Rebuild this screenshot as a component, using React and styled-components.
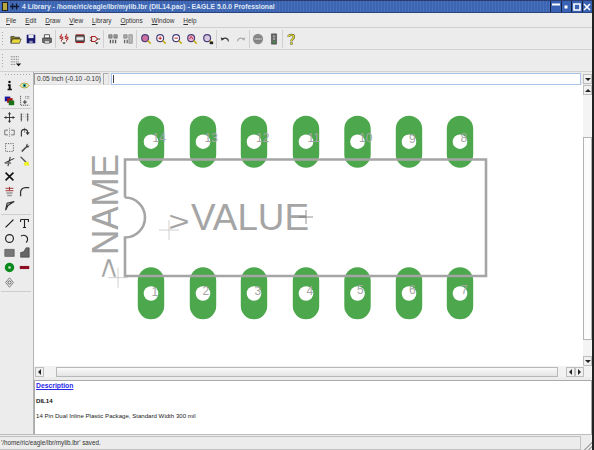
import React from "react";
import styled, { createGlobalStyle, css } from "styled-components";

const GlobalStyle = createGlobalStyle`
    html, body {
        margin: 0;
        padding: 0;
        background: #ececec;
    }
    * {
        box-sizing: border-box;
    }
`;

const Icon = ({ children, size = 12 }) => (
    <svg width={size} height={size} viewBox="0 0 14 14" fill="none" xmlns="http://www.w3.org/2000/svg">
        {children}
    </svg>
);

const magnifier = (lens, extra) => (
    <Icon>
        <circle cx="6" cy="6" r="4" fill={lens} stroke="#4a3f7a" strokeWidth="1.4" />
        <path d="M9 9L12.5 12.5" stroke="#c8b020" strokeWidth="2" />
        {extra}
    </Icon>
);

const icons = {
    open: (
        <Icon>
            <path d="M1 4h4l1 1h5v2H3L1 11z" fill="#8a7a20" stroke="#333" strokeWidth="0.8" />
            <path d="M3 7h10l-2 5H1z" fill="#e8d838" stroke="#333" strokeWidth="0.8" />
        </Icon>
    ),
    save: (
        <Icon>
            <path d="M2 2h10v10H2z" fill="#16166e" />
            <path d="M4 2h6v4H4z" fill="#e8e8f0" />
            <path d="M5 9h4v3H5z" fill="#9090b0" />
        </Icon>
    ),
    print: (
        <Icon>
            <path d="M4 2h6v4H4z" fill="#fff" stroke="#444" />
            <path d="M2 6h10v5H2z" fill="#777" stroke="#333" />
            <path d="M4 9h6v3H4z" fill="#ddd" stroke="#444" strokeWidth="0.7" />
        </Icon>
    ),
    symbol: (
        <Icon>
            <path d="M4 1v2l-2 1 4 1-4 1 4 1-2 1v2M10 1v2l-2 1 4 1-4 1 4 1-2 1v2" stroke="#b02020" strokeWidth="1" />
            <path d="M5 11l2 2 2-2z" fill="#111" />
        </Icon>
    ),
    pac: (
        <Icon>
            <path d="M2 3h10v7H2z" fill="#777" stroke="#222" />
            <path d="M3 5h8v3H3z" fill="#eee" />
            <path d="M2 11h10" stroke="#b02020" strokeWidth="1.5" />
            <path d="M2 2h10" stroke="#b02020" strokeWidth="1" />
        </Icon>
    ),
    dev: (
        <Icon>
            <path d="M3 4h4l3 3-3 3H3z" stroke="#b02020" strokeWidth="1.2" />
            <path d="M1 5.5h2M1 8.5h2M10 7h3" stroke="#333" />
            <path d="M7 11l2 2 2-2z" fill="#111" />
        </Icon>
    ),
    partA: (
        <Icon>
            <path d="M2 2h4v4H2zM8 2h4v4H8z" fill="#999" stroke="#555" strokeWidth="0.6" />
            <path d="M4 8v4M7 8v4M10 8v4" stroke="#555" strokeWidth="1.5" />
        </Icon>
    ),
    partB: (
        <Icon>
            <path d="M2 2h4v4H2z" fill="#aaa" stroke="#666" strokeWidth="0.6" />
            <path d="M8 2h4v10H8z" fill="#bbb" stroke="#666" strokeWidth="0.6" />
            <path d="M3 8v4M6 8v4" stroke="#666" strokeWidth="1.5" />
        </Icon>
    ),
    zoomFit: magnifier("#d070a0"),
    zoomIn: magnifier("#fff", <path d="M4 6h4M6 4v4" stroke="#c02020" strokeWidth="1.2" />),
    zoomOut: magnifier("#fff", <path d="M4 6h4" stroke="#c02020" strokeWidth="1.2" />),
    zoomPrev: magnifier("#e8b0d0", <path d="M4 7l2-3 2 3" stroke="#c02020" />),
    zoomSel: magnifier("#d8c8e0", <path d="M9 10h4v3H9z" fill="#222" />),
    undo: (
        <Icon>
            <path d="M11 10C11 6 7 5 4 7" stroke="#333" strokeWidth="1.3" />
            <path d="M2 5l1 4 3-2z" fill="#333" />
        </Icon>
    ),
    redo: (
        <Icon>
            <path d="M3 10C3 6 7 5 10 7" stroke="#aaa" strokeWidth="1.3" />
            <path d="M12 5l-1 4-3-2z" fill="#aaa" />
        </Icon>
    ),
    stop: (
        <Icon>
            <circle cx="7" cy="7" r="6" fill="#8a8a8a" />
            <path d="M3 6h8v2H3z" fill="#ddd" />
            <path d="M4.5 4.5v5M7 4.5v5M9.5 4.5v5" stroke="#666" strokeWidth="0.8" />
        </Icon>
    ),
    run: (
        <Icon>
            <path d="M4 1h6v12H4z" fill="#666" stroke="#333" strokeWidth="0.6" />
            <circle cx="7" cy="4" r="1.3" fill="#a8a8a8" />
            <circle cx="7" cy="7" r="1.3" fill="#a8a8a8" />
            <circle cx="7" cy="10.5" r="1.3" fill="#30a030" />
        </Icon>
    ),
    help: (
        <Icon>
            <path d="M4 4.5C4 1.5 10.5 1.5 10.5 4.5 10.5 7 7.5 6.5 7.5 9.5" stroke="#333" strokeWidth="2.6" />
            <path d="M4 4.5C4 1.5 10.5 1.5 10.5 4.5 10.5 7 7.5 6.5 7.5 9.5" stroke="#f0e830" strokeWidth="1.5" />
            <path d="M6.3 11h2.4v2.4H6.3z" fill="#f0e830" stroke="#333" strokeWidth="0.5" />
        </Icon>
    ),
    grid: (
        <Icon>
            <path d="M1 2h9M1 5h9M1 8h9M1 11h6" stroke="#555" strokeDasharray="1 1" />
            <path d="M7 10h6l-3 3z" fill="#111" />
        </Icon>
    ),
    info: (
        <Icon>
            <circle cx="7" cy="2.5" r="1.6" fill="#111" />
            <path d="M5 5.5h3.5V11H10v2H4.5v-2H6V7.5H5z" fill="#111" />
        </Icon>
    ),
    eye: (
        <Icon>
            <path d="M1 7c3-4 9-4 12 0-3 4-9 4-12 0z" fill="#f4f0b0" stroke="#a09020" />
            <circle cx="7" cy="7" r="2.2" fill="#20a0a0" />
            <circle cx="7" cy="7" r="0.9" fill="#111" />
        </Icon>
    ),
    layers: (
        <Icon>
            <path d="M1 2h7v6H1z" fill="#1818a0" />
            <path d="M4 4h7v6H4z" fill="#a01818" />
            <path d="M6 7h7v6H6z" fill="#187018" />
        </Icon>
    ),
    mark: (
        <Icon>
            <path d="M2 1v12h11" stroke="#333" strokeDasharray="1.5 1" />
            <path d="M5 9h5M7.5 6.5v5" stroke="#111" />
            <path d="M8 2h5M8 4h5" stroke="#555" strokeDasharray="1 1" />
        </Icon>
    ),
    move: (
        <Icon>
            <path d="M7 1v12M1 7h12" stroke="#333" strokeWidth="1.2" />
            <path d="M7 0l2 3H5zM7 14l2-3H5zM0 7l3-2v4zM14 7l-3-2v4z" fill="#333" />
        </Icon>
    ),
    copy: (
        <Icon>
            <path d="M3 2v10M2 3h2M2 6h2M2 9h2M11 2v10M10 3h2M10 6h2M10 9h2" stroke="#555" strokeWidth="1.2" />
            <path d="M5 3h1M5 6h1M8 3h1M8 6h1" stroke="#999" />
        </Icon>
    ),
    mirror: (
        <Icon>
            <path d="M7 1v12" stroke="#777" strokeDasharray="1.5 1" />
            <path d="M5 4H1v6h4M9 4h4v6H9" stroke="#666" strokeWidth="1.1" />
        </Icon>
    ),
    rotate: (
        <Icon>
            <path d="M3 12V7a4 4 0 0 1 8 0" stroke="#333" strokeWidth="1.4" />
            <path d="M9 7h4l-2 3zM7 1v6" fill="#333" stroke="#333" strokeWidth="0.7" />
        </Icon>
    ),
    group: (
        <Icon>
            <path d="M2 2h10v10H2z" stroke="#444" strokeDasharray="1.5 1.5" />
        </Icon>
    ),
    wrench: (
        <Icon>
            <path d="M12 2L9 3.500v2L3 11l1 2 6-6h2l1.500-3-2 1-1-1z" fill="#444" />
        </Icon>
    ),
    cut: (
        <Icon>
            <path d="M13 3L1 9M8 1L5 13" stroke="#333" strokeWidth="1.3" />
            <path d="M1 8h8v2H1z" fill="#777" />
        </Icon>
    ),
    paint: (
        <Icon>
            <path d="M2 1l7 7" stroke="#555" strokeWidth="1.6" />
            <path d="M7 8l5-1 1 5H6z" fill="#f0f020" />
        </Icon>
    ),
    del: (
        <Icon>
            <path d="M2 2l10 10M12 2L2 12" stroke="#111" strokeWidth="2" />
        </Icon>
    ),
    add: (
        <Icon>
            <path d="M2 3h10M2 6h10M7 1v5" stroke="#a03030" strokeWidth="1.2" />
            <path d="M3 8h8v2H3zM4 11h6v2H4z" fill="#999" />
        </Icon>
    ),
    miter: (
        <Icon>
            <path d="M2 13V8a6 6 0 0 1 6-6h5" stroke="#333" strokeWidth="1.6" />
        </Icon>
    ),
    split: (
        <Icon>
            <path d="M2 13L4 4l9-2-8 5z" stroke="#333" strokeWidth="1.5" />
        </Icon>
    ),
    line: (
        <Icon>
            <path d="M2 12L12 2" stroke="#111" strokeWidth="1.4" />
        </Icon>
    ),
    text: (
        <Icon>
            <path d="M2 2h10v3M2 2v3M7 2v10M5 12h4" stroke="#222" strokeWidth="1.4" />
        </Icon>
    ),
    circle: (
        <Icon>
            <circle cx="7" cy="7" r="5" stroke="#222" strokeWidth="1.5" />
        </Icon>
    ),
    arc: (
        <Icon>
            <path d="M2.500 4A5 5 0 1 1 9 12" stroke="#222" strokeWidth="1.5" />
        </Icon>
    ),
    rect: (
        <Icon>
            <path d="M1 3h12v9H1z" fill="#777" stroke="#444" strokeWidth="0.7" />
        </Icon>
    ),
    polygon: (
        <Icon>
            <path d="M2 13V7l4-1 3-5h4v12z" fill="#666" stroke="#333" strokeWidth="0.7" />
        </Icon>
    ),
    pad: (
        <Icon>
            <circle cx="7" cy="7" r="6" fill="#0a8a1a" />
            <circle cx="7" cy="7" r="1.600" fill="#d0e8d0" />
        </Icon>
    ),
    smd: (
        <Icon>
            <path d="M1 5h12v4H1z" fill="#8c0f22" />
        </Icon>
    ),
    origin: (
        <Icon>
            <path d="M7 1l5 6-5 6-5-6z" stroke="#666" />
            <circle cx="7" cy="7" r="2" stroke="#444" />
        </Icon>
    ),
};

const MENU = ["File", "Edit", "Draw", "View", "Library", "Options", "Window", "Help"];

const TOP_TOOLS = [
    ["open", "save", "print"],
    ["symbol", "pac", "dev"],
    ["partA", "partB"],
    ["zoomFit", "zoomIn", "zoomOut", "zoomPrev", "zoomSel"],
    ["undo", "redo"],
    ["stop", "run"],
    ["help"],
];

const SIDE_TOOLS = [
    ["info", "eye", "layers", "mark"],
    ["move", "copy", "mirror", "rotate", "group", "wrench", "cut", "paint", "del", null, "add", "miter", "split", null],
    ["line", "text", "circle", "arc", "rect", "polygon", "pad", "smd", "origin", null],
];

const PADS_X = [151, 203, 254, 306, 357.500, 409, 460];
const TOP_LABELS = [
    ["14", 152.500, 142],
    ["13", 204.500, 142],
    ["12", 256, 142],
    ["11", 307.500, 142],
    ["10", 359, 142],
    ["9", 409, 143],
    ["8", 460.500, 142],
];
const BOTTOM_LABELS = [
    ["1", 151.500, 296],
    ["2", 202.500, 295],
    ["3", 254.500, 295],
    ["4", 306.500, 295],
    ["5", 357, 294],
    ["6", 409, 294],
    ["7", 461, 294],
];

const Cross = ({ x, y, r, color }) => (
    <path d={`M${x - r} ${y}H${x + r}M${x} ${y - r}V${y + r}`} stroke={color} strokeWidth="0.8" />
);

const Board = () => (
    <CanvasSvg viewBox="34 85 549 281" xmlns="http://www.w3.org/2000/svg">
        {PADS_X.map((x) => (
            <g key={x}>
                <rect x={x - 13.200} y="115.700" width="26.400" height="52" rx="13.200" fill="#4ca74d" />
                <circle cx={x} cy="141.700" r="7.300" fill="#fff" />
                <rect x={x - 13.200} y="267.300" width="26.400" height="52" rx="13.200" fill="#4ca74d" />
                <circle cx={x} cy="293.500" r="7.300" fill="#fff" />
            </g>
        ))}
        <path
            d="M125 197.500V159.500H486V276H125V237.500A20 20 0 0 0 125 197.500"
            stroke="#a5a5a5"
            strokeWidth="2.600"
            fill="none"
        />
        {[...TOP_LABELS, ...BOTTOM_LABELS].map(([label, x, y]) => (
            <PadLabel key={label} x={x} y={y}>
                {label}
            </PadLabel>
        ))}
        <PromptText x="168.500" y="230.500" textLength="21" lengthAdjust="spacingAndGlyphs">
            &gt;
        </PromptText>
        <BigText x="191" y="230" textLength="118" lengthAdjust="spacingAndGlyphs">
            VALUE
        </BigText>
        <PromptText transform="translate(118 278.500) rotate(-90)" textLength="21" lengthAdjust="spacingAndGlyphs">
            &gt;
        </PromptText>
        <BigText transform="translate(118 255) rotate(-90)" textLength="101" lengthAdjust="spacingAndGlyphs">
            NAME
        </BigText>
        <Cross x={118} y={277.700} r={10} color="#c4c4c4" />
        <Cross x={169} y={230} r={10} color="#c4c4c4" />
        <Cross x={306} y={217} r={7} color="#777" />
    </CanvasSvg>
);

const App = () => (
    <Window>
        <GlobalStyle />
        <TitleBar>
            <TitleIcon />
            <TitlePin>
                <svg width="9" height="9" viewBox="0 0 9 9" xmlns="http://www.w3.org/2000/svg">
                    <path d="M0 4.500h9M2.500 1.500v6M6.500 1.500v6" stroke="#101830" strokeWidth="1.300" />
                </svg>
            </TitlePin>
            <TitleText>4 Library - /home/ric/eagle/lbr/mylib.lbr (DIL14.pac) - EAGLE 5.0.0 Professional</TitleText>
            <WindowButtons>
                <WindowButton>
                    <svg width="8" height="8" viewBox="0 0 8 8" xmlns="http://www.w3.org/2000/svg">
                        <path d="M0 1.500h8" stroke="#fff" strokeWidth="2" />
                    </svg>
                </WindowButton>
                <WindowButton>
                    <svg width="8" height="8" viewBox="0 0 8 8" xmlns="http://www.w3.org/2000/svg">
                        <path d="M2.500 2.500h3v3h-3z" fill="#fff" />
                    </svg>
                </WindowButton>
                <WindowButton>
                    <svg width="8" height="8" viewBox="0 0 8 8" xmlns="http://www.w3.org/2000/svg">
                        <path d="M1 1h6v6H1z" stroke="#fff" strokeWidth="1.600" fill="none" />
                    </svg>
                </WindowButton>
                <WindowButton>
                    <svg width="8" height="8" viewBox="0 0 8 8" xmlns="http://www.w3.org/2000/svg">
                        <path d="M1 1l6 6M7 1L1 7" stroke="#fff" strokeWidth="1.600" />
                    </svg>
                </WindowButton>
            </WindowButtons>
        </TitleBar>

        <MenuBar>
            {MENU.map((item) => (
                <MenuItem key={item}>
                    <u>{item[0]}</u>
                    {item.slice(1)}
                </MenuItem>
            ))}
        </MenuBar>

        <ToolRow>
            <Grip />
            {TOP_TOOLS.map((group, i) => (
                <React.Fragment key={group[0]}>
                    {i > 0 && <ToolDivider />}
                    {group.map((name) => (
                        <ToolButton key={name}>{icons[name]}</ToolButton>
                    ))}
                </React.Fragment>
            ))}
        </ToolRow>
        <ToolRow>
            <Grip />
            <ToolButton>{icons.grid}</ToolButton>
        </ToolRow>

        <Body>
            <SideDock>
                <SideGrip />
                {SIDE_TOOLS.map((group, i) => (
                    <SideGroup key={i}>
                        {group.map((name, j) => (
                            <SideButton key={j}>{name && icons[name]}</SideButton>
                        ))}
                    </SideGroup>
                ))}
            </SideDock>

            <Workspace>
                <CommandRow>
                    <CoordField>0.05 inch (-0.10 -0.10)</CoordField>
                    <ParamButton />
                    <CommandInput>
                        <Caret />
                    </CommandInput>
                    <ArrowButton $dir="down" />
                </CommandRow>

                <CanvasRow>
                    <Board />
                    <VerticalBar>
                        <ArrowButton $dir="up" />
                        <VerticalTrack>
                            <VerticalThumb />
                        </VerticalTrack>
                        <ArrowButton $dir="down" />
                    </VerticalBar>
                </CanvasRow>

                <HorizontalBar>
                    <ArrowButton $dir="left" />
                    <HorizontalThumb>
                        <ThumbGrip />
                    </HorizontalThumb>
                    <ArrowPair>
                        <ArrowButton $dir="left" />
                        <ArrowButton $dir="right" />
                    </ArrowPair>
                </HorizontalBar>

                <Splitter>
                    <SplitterDots />
                </Splitter>

                <Description>
                    <DescriptionLink>Description</DescriptionLink>
                    <DescriptionName>DIL14</DescriptionName>
                    <DescriptionText>14 Pin Dual Inline Plastic Package, Standard Width 300 mil</DescriptionText>
                </Description>
            </Workspace>
        </Body>

        <StatusBar>
            <StatusField>'/home/ric/eagle/lbr/mylib.lbr' saved.</StatusField>
            <ResizeGrip />
        </StatusBar>
    </Window>
);

const Window = styled.div`
    width: 594px;
    height: 450px;
    display: flex;
    flex-direction: column;
    overflow: hidden;
    background: #ececec;
    border-right: 2px solid #222;
    font-family: "Liberation Sans", Arial, sans-serif;
    color: #222;
`;

const TitleBar = styled.div`
    height: 13px;
    flex: none;
    display: flex;
    align-items: center;
    padding-left: 2px;
    border-top: 1px solid #2a3c70;
    border-bottom: 1px solid #2a4480;
    background-color: #3b64b2;
    background-image: repeating-linear-gradient(90deg, rgba(255, 255, 255, 0.08) 0 1px, transparent 1px 3px);
`;

const TitleIcon = styled.span`
    width: 6px;
    height: 9px;
    background: #b8a840;
    border: 1px solid #222;
`;

const TitlePin = styled.span`
    display: flex;
    margin-left: 2px;
`;

const TitleText = styled.span`
    margin-left: 3px;
    font-size: 6.800px;
    font-weight: 700;
    color: #dfe6f4;
    white-space: nowrap;
    flex: 1;
`;

const WindowButtons = styled.div`
    display: flex;
    height: 11px;
    gap: 1px;
    padding-left: 1px;
    background: #16203c;
`;

const WindowButton = styled.span`
    width: 9.500px;
    height: 11px;
    display: flex;
    align-items: center;
    justify-content: center;
    background: #3a62b4;
`;

const MenuBar = styled.div`
    height: 15px;
    flex: none;
    display: flex;
    align-items: center;
    padding-left: 6px;
    gap: 9px;
    font-size: 6.400px;
    color: #333;
    border-bottom: 1px solid #cfcfcf;
`;

const MenuItem = styled.span`
    white-space: nowrap;
`;

const ToolRow = styled.div`
    height: 22px;
    flex: none;
    display: flex;
    align-items: center;
    border-bottom: 1px solid #d2d2d2;
`;

const Grip = styled.span`
    width: 8px;
    height: 16px;
    flex: none;
    margin-right: 0;
    background-image: radial-gradient(#aaa 0.6px, transparent 0.7px);
    background-size: 3px 3px;
    background-position: 1px 0;
    background-repeat: repeat-y;
`;

const ToolButton = styled.span`
    width: 15.500px;
    height: 15px;
    flex: none;
    display: flex;
    align-items: center;
    justify-content: center;
`;

const ToolDivider = styled.span`
    width: 2px;
    height: 18px;
    flex: none;
    border-left: 1px solid #d0d0d0;
`;

const Body = styled.div`
    flex: 1;
    min-height: 0;
    display: flex;
`;

const SideDock = styled.div`
    width: 34px;
    flex: none;
    padding: 1px 0 0 1px;
    border-right: 1px solid #b4b4b4;
`;

const SideGrip = styled.div`
    height: 4px;
    margin: 0 3px;
    background-image: radial-gradient(#aaa 0.6px, transparent 0.7px);
    background-size: 3px 3px;
    background-repeat: repeat-x;
`;

const SideGroup = styled.div`
    display: grid;
    grid-template-columns: 15px 15px;
    grid-auto-rows: 14.700px;
    padding: 1px 0 1px 1px;
    margin-right: 2px;
    border-bottom: 1px solid #cdcdcd;
`;

const SideButton = styled.span`
    display: flex;
    align-items: center;
    justify-content: center;

    svg {
        width: 11px;
        height: 11px;
    }
`;

const Workspace = styled.div`
    flex: 1;
    min-width: 0;
    display: flex;
    flex-direction: column;
`;

const CommandRow = styled.div`
    height: 13px;
    flex: none;
    display: flex;
    align-items: center;
    gap: 2px;
    padding-top: 1px;
`;

const CoordField = styled.span`
    width: 67px;
    height: 12px;
    flex: none;
    padding-left: 2px;
    font-size: 6.500px;
    line-height: 10px;
    white-space: nowrap;
    color: #333;
    background: #ececec;
    border: 1px solid #999;
    border-right-color: #ddd;
    border-bottom-color: #ddd;
`;

const ParamButton = styled.span`
    width: 6px;
    height: 12px;
    flex: none;
    border: 1px solid #aaa;
    border-right-color: #ddd;
    border-bottom-color: #ddd;
`;

const CommandInput = styled.span`
    flex: 1;
    height: 12px;
    padding-left: 1px;
    background: #fff;
    border: 1px solid #a9c4e8;
`;

const Caret = styled.span`
    display: block;
    width: 1px;
    height: 8px;
    margin-top: 1px;
    background: #444;
`;

const arrowShapes = {
    up: css`
        border-left: 3px solid transparent;
        border-right: 3px solid transparent;
        border-bottom: 3px solid #222;
    `,
    down: css`
        border-left: 3px solid transparent;
        border-right: 3px solid transparent;
        border-top: 3px solid #222;
    `,
    left: css`
        border-top: 3px solid transparent;
        border-bottom: 3px solid transparent;
        border-right: 3px solid #222;
    `,
    right: css`
        border-top: 3px solid transparent;
        border-bottom: 3px solid transparent;
        border-left: 3px solid #222;
    `,
};

const ArrowButton = styled.span`
    width: 9px;
    height: 10px;
    flex: none;
    display: flex;
    align-items: center;
    justify-content: center;
    background: #f0f0f0;
    border: 1px solid #bdbdbd;
    &::before {
        content: "";
        width: 0;
        height: 0;
        ${(p) => arrowShapes[p.$dir]}
    }
`;

const CanvasRow = styled.div`
    height: 281px;
    flex: none;
    display: flex;
`;

const CanvasSvg = styled.svg`
    width: 549px;
    height: 281px;
    flex: none;
    display: block;
    background: #fff;
`;

const PadLabel = styled.text`
    font-family: "Liberation Sans", Arial, sans-serif;
    font-size: 12px;
    fill: #a6a6a6;
`;

const BigText = styled.text`
    font-family: "Liberation Sans", Arial, sans-serif;
    font-size: 36px;
    fill: #a5a5a5;
`;

const PromptText = styled.text`
    font-family: "Liberation Sans", Arial, sans-serif;
    font-size: 27px;
    fill: #a5a5a5;
`;

const VerticalBar = styled.div`
    flex: 1;
    display: flex;
    flex-direction: column;
    background: #f4f4f4;
`;

const VerticalTrack = styled.div`
    flex: 1;
    padding: 42px 0 16px;
`;

const VerticalThumb = styled.div`
    height: 100%;
    background: #fcfcfc;
    border: 1px solid #b4b4b4;
`;

const HorizontalBar = styled.div`
    height: 11px;
    flex: none;
    display: flex;
    align-items: center;
    padding-left: 1px;
    background: #f2f2f2;
`;

const HorizontalThumb = styled.div`
    width: 502px;
    height: 10px;
    margin-left: 12px;
    display: flex;
    align-items: center;
    justify-content: center;
    background: linear-gradient(#fafafa, #e4e4e4);
    border: 1px solid #b8b8b8;
`;

const ThumbGrip = styled.span`
    width: 10px;
    height: 6px;
    background-image: radial-gradient(#b4b4b4 0.6px, transparent 0.7px);
    background-size: 2px 2px;
`;

const ArrowPair = styled.div`
    display: flex;
    margin-left: 8px;
`;

const Splitter = styled.div`
    height: 3px;
    flex: none;
    display: flex;
    justify-content: center;
    background: #ececec;
`;

const SplitterDots = styled.span`
    width: 184px;
    height: 2px;
    background-image: radial-gradient(#bbb 0.6px, transparent 0.7px);
    background-size: 2px 2px;
`;

const Description = styled.div`
    height: 55px;
    flex: none;
    padding: 0 1px;
    background: #fff;
    border: 1px solid #aaa;
    font-size: 6.100px;
    color: #222;
`;

const DescriptionLink = styled.div`
    font-size: 6.800px;
    font-weight: 700;
    color: #2a2ae8;
    text-decoration: underline;
    line-height: 10px;
`;

const DescriptionName = styled.div`
    margin-top: 5px;
    font-weight: 700;
    color: #111;
    line-height: 10px;
`;

const DescriptionText = styled.div`
    margin-top: 5px;
    line-height: 10px;
`;

const StatusBar = styled.div`
    height: 16px;
    flex: none;
    display: flex;
    align-items: flex-end;
    padding-top: 2px;
    border-top: 1px solid #bcbcbc;
`;

const StatusField = styled.div`
    width: 581px;
    height: 14px;
    padding-left: 1px;
    font-size: 6.300px;
    line-height: 12px;
    color: #333;
    border: 1px solid #c0c0c0;
    border-left: 0;
`;

const ResizeGrip = styled.span`
    flex: 1;
    height: 8px;
    margin-left: 3px;
    background: linear-gradient(135deg, transparent 50%, #aaa 50%, #aaa 60%, transparent 60%, transparent 75%, #aaa 75%, #aaa 85%, transparent 85%);
`;

export default App;
